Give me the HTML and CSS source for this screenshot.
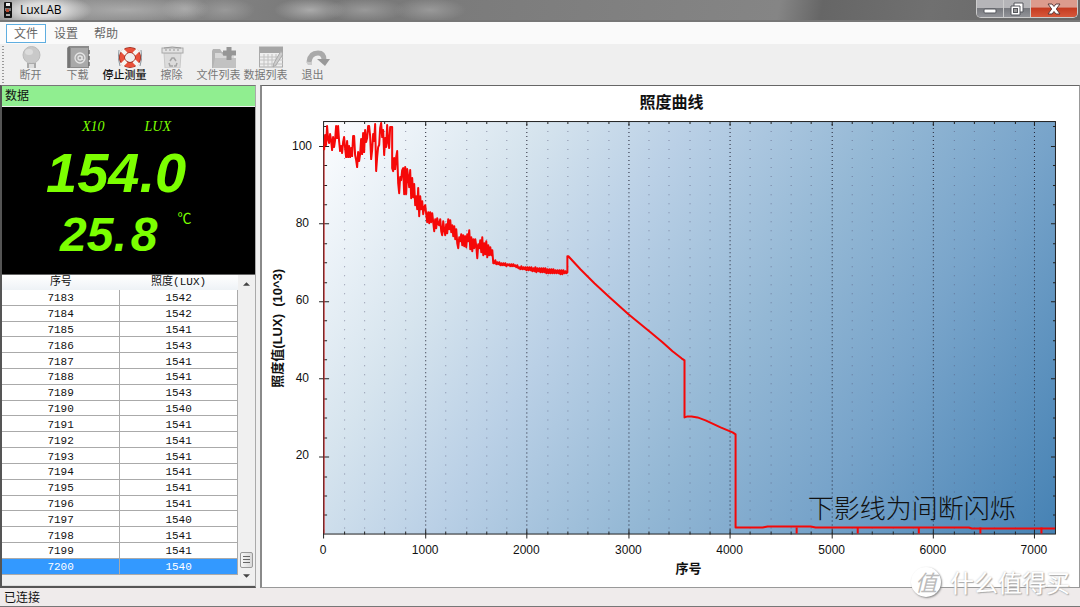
FILE: index.html
```html
<!DOCTYPE html>
<html lang="zh-CN">
<head>
<meta charset="utf-8">
<title>LuxLAB</title>
<link rel="stylesheet" href="styles.css">
</head>
<body>
<div class="window">
  <header class="titlebar">
    <svg class="app-icon" viewBox="0 0 8 16" aria-hidden="true"><rect width="8" height="16" rx="1" fill="#151515"/><rect x="2" y="1" width="4" height="3" fill="#eee"/><rect x="1" y="6" width="6" height="3" fill="#777"/><rect x="2" y="7" width="3" height="3" fill="#b5442a"/><rect x="2" y="12" width="4" height="2" fill="#aaa"/></svg>
    <h1 class="app-title">LuxLAB</h1>
    <div class="window-controls">
      <button class="win-btn" aria-label="最小化"><svg viewBox="0 0 14 14"><rect x="1" y="7" width="12" height="4" rx="1" fill="#fff" stroke="#55575c"/></svg></button>
      <button class="win-btn" aria-label="还原"><svg viewBox="0 0 14 14"><path d="M4 1h9v9h-3v3H1V4h3z" fill="#fff" stroke="#55575c"/><path d="M4 4h6v6" fill="none" stroke="#55575c"/><rect x="3.500" y="6.500" width="4" height="4" fill="#999" stroke="#55575c"/></svg></button>
      <button class="win-btn close" aria-label="关闭"><svg viewBox="0 0 14 14"><path d="M1 2h4l2 2.500L9 2h4L9.300 7l3.700 5H9L7 9.500 5 12H1l3.700-5z" fill="#fff" stroke="#5c3b3b"/></svg></button>
    </div>
  </header>

  <nav class="menubar">
    <button class="menu active">文件</button>
    <button class="menu">设置</button>
    <button class="menu">帮助</button>
  </nav>

  <div class="toolbar">
    <button class="tool"><svg viewBox="0 0 24 22"><circle cx="12.500" cy="9" r="8.500" fill="#c9c9c9" stroke="#bbb"/><ellipse cx="10" cy="6" rx="4" ry="3" fill="#dcdcdc"/><path d="M8 17h9v5H8z" fill="#aaa"/><path d="M10 18h5v4h-5z" fill="#ddd"/></svg><span>断开</span></button>
    <button class="tool"><svg viewBox="0 0 24 22"><path d="M3 0h20v22H1V2z" fill="#8b8b8b"/><path d="M5 2h17v19H5z" fill="#a9a9a9"/><path d="M3 1v21M23 4v4M23 10v4M23 16v4" stroke="#6f6f6f" stroke-width="1.500"/><circle cx="14" cy="12" r="5" fill="none" stroke="#e6e6e6" stroke-width="1.300"/><circle cx="14" cy="12" r="2" fill="none" stroke="#e6e6e6" stroke-width="1.300"/><path d="M16 10v3q1 2 3 0" fill="none" stroke="#e6e6e6"/></svg><span>下载</span></button>
    <button class="tool enabled"><svg class="shifted" viewBox="0 0 24 22"><path d="M1 4q-2 8 1 16M23 4q2 8-1 16" fill="none" stroke="#8c979f"/><ellipse cx="12" cy="11.500" rx="8" ry="7.500" fill="none" stroke="#9b2d1e" stroke-width="6"/><ellipse cx="12" cy="11.500" rx="8" ry="7.500" fill="none" stroke="#e9513b" stroke-width="4.500"/><path d="M4 4l4 4M20 4l-4 4M4 19l4-4M20 19l-4-4" stroke="#f5f5f2" stroke-width="4"/></svg><span>停止测量</span></button>
    <button class="tool"><svg viewBox="0 0 24 22"><path d="M4 7h17l-1 15H5z" fill="#dcdcdc" stroke="#c8c8c8"/><rect x="2" y="2" width="21" height="5" fill="#e2e2e2" stroke="#aaa"/><path d="M4 2q8-2 17 0M6 3v2M10 3v2M14 3v2M18 3v2" fill="none" stroke="#999"/><path d="M10 15l2-3h2l2 3M9 17l1 3h3M17 17l-1 3h-2" fill="none" stroke="#a4a4a4" stroke-width="1.500"/></svg><span>擦除</span></button>
    <button class="tool"><svg class="shifted" viewBox="0 0 24 22"><path d="M0 5l1-2h7l2 3h10v16H0z" fill="#b4b4b4"/><path d="M3 7h6l3 3h10v12H3z" fill="#d8d8d8"/><path d="M1 22l2-10h21v10z" fill="#c2c2c2"/><path d="M17 1v13M11 7h13" stroke="#969696" stroke-width="5"/></svg><span>文件列表</span></button>
    <button class="tool"><svg class="shifted" viewBox="0 0 24 22"><rect x=".500" y="1" width="23" height="20" fill="#eee" stroke="#aaa"/><path d="M1 1h23v6H1z" fill="#a5a5a5"/><path d="M1 11h23M1 14h23M1 18h23M5 8v13M9 8v13M13 8v13M17 8v13" stroke="#c2c2c2"/><path d="M22 5l2 3-7 11-3 2 1-4z" fill="#ccc" stroke="#aaa"/></svg><span>数据列表</span></button>
    <button class="tool"><svg class="shifted" viewBox="0 0 24 22"><path d="M3 16Q4 7 12 7q6 0 6 7" fill="none" stroke="#a9a9a9" stroke-width="5"/><path d="M11 13h13l-5 7z" fill="#999"/><path d="M0 16h6v3H2z" fill="#ccc"/></svg><span>退出</span></button>
  </div>

  <main class="content">
    <section class="side">
      <h2 class="side-title">数据</h2>
      <div class="meter">
        <div class="units"><span>X10</span><span>LUX</span></div>
        <div class="reading lux"><span>154.</span><span>0</span></div>
        <div class="reading temp"><span>25.</span><span>8</span><span class="degree">℃</span></div>
      </div>
      <div class="list">
        <div class="table-area">
          <table class="records">
            <thead><tr><th scope="col">序号</th><th scope="col">照度(LUX)</th></tr></thead>
            <tbody>
              <tr><td>7183</td><td>1542</td></tr>
              <tr><td>7184</td><td>1542</td></tr>
              <tr><td>7185</td><td>1541</td></tr>
              <tr><td>7186</td><td>1543</td></tr>
              <tr><td>7187</td><td>1541</td></tr>
              <tr><td>7188</td><td>1541</td></tr>
              <tr><td>7189</td><td>1543</td></tr>
              <tr><td>7190</td><td>1540</td></tr>
              <tr><td>7191</td><td>1541</td></tr>
              <tr><td>7192</td><td>1541</td></tr>
              <tr><td>7193</td><td>1541</td></tr>
              <tr><td>7194</td><td>1541</td></tr>
              <tr><td>7195</td><td>1541</td></tr>
              <tr><td>7196</td><td>1541</td></tr>
              <tr><td>7197</td><td>1540</td></tr>
              <tr><td>7198</td><td>1541</td></tr>
              <tr><td>7199</td><td>1541</td></tr>
              <tr class="selected"><td>7200</td><td>1540</td></tr>
            </tbody>
          </table>
        </div>
        <div class="scrollbar">
          <button class="arrow" aria-label="向上滚动"><svg viewBox="0 0 8 4"><path d="M0 4L4 0l4 4z" fill="#444"/></svg></button>
          <span class="track"></span>
          <span class="thumb"></span>
          <button class="arrow" aria-label="向下滚动"><svg viewBox="0 0 8 4"><path d="M0 0h8L4 4z" fill="#444"/></svg></button>
        </div>
      </div>
    </section>

    <section class="chart-pane">
      <svg class="chart" viewBox="262 86 816 500" role="img" aria-label="照度曲线">
        <defs>
          <linearGradient id="plot-fill" gradientUnits="userSpaceOnUse" x1="323" y1="121" x2="1031" y2="570">
            <stop offset="0" stop-color="#fcfdff"/><stop offset=".22" stop-color="#d6e4ee"/><stop offset=".37" stop-color="#bad0e6"/><stop offset=".57" stop-color="#94b8d5"/><stop offset=".74" stop-color="#78a4ca"/><stop offset="1" stop-color="#4682b4"/>
          </linearGradient>
        </defs>
        <text class="chart-title" x="671" y="108">照度曲线</text>
        <rect x="323.500" y="121.500" width="731" height="412" fill="url(#plot-fill)"/>
        <path class="grid-minor" d="M344.500 131V533M364.500 131V533M384.500 131V533M405.500 131V533M445.500 131V533M466.500 131V533M486.500 131V533M506.500 131V533M547.500 131V533M567.500 131V533M587.500 131V533M608.500 131V533M648.500 131V533M668.500 131V533M689.500 131V533M709.500 131V533M749.500 131V533M770.500 131V533M790.500 131V533M810.500 131V533M851.500 131V533M871.500 131V533M892.500 131V533M912.500 131V533M953.500 131V533M973.500 131V533M993.500 131V533M1014.500 131V533"/>
        <path class="grid-major" d="M425.500 124V533M526.500 124V533M628.500 124V533M729.500 124V533M831.500 124V533M932.500 124V533M1033.500 124V533"/>
        <path class="axis" d="M344.500 531v3m0-412v2M364.500 531v3m0-412v2M384.500 531v3m0-412v2M405.500 531v3m0-412v2M445.500 531v3m0-412v2M466.500 531v3m0-412v2M486.500 531v3m0-412v2M506.500 531v3m0-412v2M547.500 531v3m0-412v2M567.500 531v3m0-412v2M587.500 531v3m0-412v2M608.500 531v3m0-412v2M648.500 531v3m0-412v2M668.500 531v3m0-412v2M689.500 531v3m0-412v2M709.500 531v3m0-412v2M749.500 531v3m0-412v2M770.500 531v3m0-412v2M790.500 531v3m0-412v2M810.500 531v3m0-412v2M851.500 531v3m0-412v2M871.500 531v3m0-412v2M892.500 531v3m0-412v2M912.500 531v3m0-412v2M953.500 531v3m0-412v2M973.500 531v3m0-412v2M993.500 531v3m0-412v2M1014.500 531v3m0-412v2"/>
        <path class="axis" d="M323.500 529v9M425.500 529v9M526.500 529v9M628.500 529v9M729.500 529v9M831.500 529v9M932.500 529v9M1033.500 529v9M425.500 121v5M526.500 121v5M628.500 121v5M729.500 121v5M831.500 121v5M932.500 121v5M1033.500 121v5"/>
        <path class="axis" d="M319 146.500h10M319 223.500h10M319 301.500h10M319 378.500h10M319 456.500h10M1050 146.500h4M1050 223.500h4M1050 301.500h4M1050 378.500h4M1050 456.500h4"/>
        <path class="axis" d="M324 126.500h3m725 0h3M324 165.500h3m725 0h3M324 185.500h3m725 0h3M324 204.500h3m725 0h3M324 243.500h3m725 0h3M324 262.500h3m725 0h3M324 282.500h3m725 0h3M324 320.500h3m725 0h3M324 340.500h3m725 0h3M324 359.500h3m725 0h3M324 398.500h3m725 0h3M324 417.500h3m725 0h3M324 437.500h3m725 0h3M324 476.500h3m725 0h3M324 495.500h3m725 0h3M324 514.500h3m725 0h3"/>
        <rect class="axis" x="323.500" y="121.500" width="731" height="412"/>
        <path class="start" d="M324 533V146"/>
        <polyline class="curve" points="324,150 325,135 326,145 327,126 328,139 329,143 330,134 331,140 332,150 333,137 334,147 335,140 336,126 337,138 338,126 339,141 340,151 341,146 342,153 343,142 344,137 345,148 346,157 347,141 348,157 349,146 350,157 351,148 352,156 353,136 354,136 355,155 356,160 357,167 358,152 359,161 360,154 361,139 362,154 363,133 364,152 365,130 366,142 367,138 368,126 369,126 370,136 371,159 372,150 373,134 374,141 375,124 376,171 377,157 378,147 379,145 380,128 381,123 382,137 383,130 384,155 385,138 386,147 387,125 388,142 389,148 390,127 391,127 392,127 392,168 393,171 394,158 395,169 396,157 397,151 398,183 399,193 400,177 401,180 402,170 403,168 404,194 405,167 406,194 407,169 408,177 409,187 410,170 411,198 412,178 413,197 414,184 415,205 416,196 417,209 418,188 419,216 420,196 421,209 422,201 423,214 424,207 425,205 426,214 427,222 428,212 429,223 430,212 431,222 432,213 433,222 434,231 435,219 436,228 437,218 438,224 439,225 440,219 441,231 442,235 443,221 444,230 445,235 446,224 447,233 448,219 449,229 450,220 451,232 452,225 453,236 454,226 455,239 456,229 457,243 458,248 459,237 460,241 461,234 462,245 463,235 464,246 465,236 466,247 467,234 468,241 469,230 470,249 471,237 472,251 473,239 474,248 475,239 476,246 477,258 478,244 479,248 480,240 481,252 482,237 483,255 484,243 485,254 486,241 487,257 488,245 489,255 490,247 491,255 492,250 493,263 494,263 495,260 496,264 497,262 498,264 499,262 500,265 501,263 502,265 503,263 504,265 505,263 506,266 507,264 508,265 509,264 510,266 511,264 512,266 513,264 514,266 515,265 516,267 517,265 518,268 519,267 520,269 521,266 522,269 523,267 524,269 525,267 526,270 527,267 528,270 529,267 530,270 531,267 532,271 533,268 534,271 535,267 536,272 537,268 538,271 539,268 540,272 541,268 542,272 543,268 544,272 545,268 546,273 547,269 548,273 549,269 550,273 551,269 552,273 553,269 554,273 555,270 556,273 557,270 558,273 559,270 560,274 561,270 562,274 563,270 564,273 565,271 566,273 567,272 567,256 568,256 580,269 594,283 608,296 628,314 650,332 662,342 672,351 681,358 684,360 684,417 687,416 691,416 697,417 705,420 720,427 732,432 735,434 735,527 762,527 767,526 810,526 815,527 968,527 971,528 1054,528"/>
        <path class="curve" d="M796 527v6M857 527v6M918 527v6M979.500 527v6M1040.500 527v6"/>
        <g class="ticks-x">
          <text x="323" y="553">0</text><text x="425" y="553">1000</text><text x="526" y="553">2000</text><text x="628" y="553">3000</text><text x="729" y="553">4000</text><text x="831" y="553">5000</text><text x="932" y="553">6000</text><text x="1033" y="553">7000</text>
        </g>
        <g class="ticks-y">
          <text x="312" y="150">100</text><text x="309" y="227">80</text><text x="309" y="304">60</text><text x="309" y="382">40</text><text x="309" y="459">20</text>
        </g>
        <text class="axis-name" x="688" y="572">序号</text>
        <text class="axis-name" transform="translate(282 328) rotate(-90)" xml:space="preserve">照度值(LUX)  (10^3)</text>
        <text class="note" x="807" y="517">下影线为间断闪烁</text>
      </svg>
    </section>
  </main>

  <footer class="statusbar">已连接</footer>
  <div class="bottom-edge"></div>
  <div class="watermark"><span class="badge">值</span><span>什么值得买</span></div>
</div>
</body>
</html>
```
FILE: styles.css
```css
* { box-sizing: border-box; }
body { margin: 0; font: 12px/16px "Noto Sans", "Noto Sans CJK SC", sans-serif; color: #111; }
button { font: inherit; color: inherit; margin: 0; padding: 0; border: 0; background: none; }
h1, h2 { margin: 0; font-size: 12px; font-weight: 400; }
svg { display: block; }

.window { position: relative; display: flex; flex-direction: column; min-height: 100vh; background: #f0f0f0; }

.titlebar {
  display: flex; align-items: center; height: 22px; padding-left: 4px; gap: 8px;
  border-bottom: 2px solid #777;
  background:
    radial-gradient(ellipse 50px 16px at 42px 10px, #ddd 40%, transparent),
    radial-gradient(ellipse 80px 12px at 125px 10px, #aaa, transparent),
    radial-gradient(ellipse 24px 12px at 185px 9px, #aaa, transparent),
    radial-gradient(ellipse 30px 12px at 225px 10px, #999, transparent),
    radial-gradient(ellipse 36px 12px at 310px 10px, #aaa, transparent),
    radial-gradient(ellipse 40px 12px at 365px 10px, #999, transparent),
    radial-gradient(ellipse 36px 12px at 430px 10px, #999, transparent),
    linear-gradient(100deg, #999 0, #777 30%, #858585 72%, #666 76%, #707070 86%, #666 100%);
}
.app-icon { width: 8px; height: 16px; }
.app-title { flex: 1; font-family: "Open Sans", sans-serif; color: #000; }
.window-controls { display: flex; align-self: flex-start; height: 18px; margin-right: 2px; border: 1px solid #ccc; border-top: 0; border-radius: 0 0 5px 5px; overflow: hidden; }
.win-btn { display: flex; align-items: center; justify-content: center; width: 27px; border-right: 1px solid #ccc; background: linear-gradient(#b5b5b8 45%, #77797e 50%, #929398); }
.win-btn svg { width: 14px; height: 14px; }
.win-btn.close { width: 46px; border: 0; background: linear-gradient(#dc9b8d 40%, #c53c22 50%, #d6583b); }

.menubar { display: flex; align-items: center; height: 22px; padding-left: 6px; background: #fafafa; color: #666; }
.menu { width: 40px; height: 19px; line-height: 17px; border: 1px solid transparent; }
.menu.active { border-color: #5faee0; background: #fff; }

.toolbar { display: flex; height: 41px; padding-left: 7px; background: radial-gradient(circle, #999 1px, transparent 1px) 2px 4px / 2px 3px repeat-y, #efefef; }
.tool { display: flex; flex-direction: column; align-items: center; width: 47px; padding-top: 2px; font-size: 11px; line-height: 14px; color: #777; white-space: nowrap; }
.tool svg { width: 24px; height: 22px; }
.tool .shifted { margin-left: 11px; }
.tool.enabled { color: #111; font-weight: 500; }

.content { flex: 1; display: flex; gap: 4px; }
.side { display: flex; flex-direction: column; width: 256px; border: 2px solid #555; border-top: 1px solid #777; border-right: 1px solid #aaa; }
.side-title { height: 20px; padding-left: 3px; line-height: 20px; background: #90ee90; }
.meter { height: 168px; padding-top: 12px; border-top: 1px solid #eee; background: #000; color: #7cff00; }
.units { display: flex; gap: 40px; padding-left: 80px; font: italic 14px/16px "Liberation Serif", serif; }
.reading { display: flex; font-family: "Liberation Sans", sans-serif; font-style: italic; font-weight: 700; }
.lux { padding: 6px 0 0 44px; gap: 0; font-size: 56px; line-height: 64px; }
.temp { padding: 2px 0 0 58px; gap: 4px; font-size: 48px; line-height: 56px; }
.degree { margin-left: 16px; font: 14px/20px "Noto Sans CJK SC", sans-serif; }

.list { flex: 1; display: flex; border-top: 1px solid #666; background: #efefef; border-bottom: 1px solid #ddd; }
.table-area { flex: 1; display: flex; padding-bottom: 10px; }
.records { width: 100%; table-layout: fixed; border-collapse: collapse; background: #fff; font: 11px/12px "Liberation Mono", "Noto Sans CJK SC", monospace; text-align: center; }
.records th { height: 15px; padding: 0; font-weight: 400; line-height: 15px; background: linear-gradient(#fff, #eef2f6); }
.records td { padding: 2px 0 0; border-right: 1px solid #aaa; border-bottom: 1px solid #aaa; }
.selected td { background: #3399ff; color: #fff; }
.scrollbar { display: flex; flex-direction: column; align-items: center; width: 17px; background: #f0f0f0; }
.arrow { display: flex; align-items: center; justify-content: center; width: 17px; height: 17px; }
.arrow svg { width: 7px; height: 4px; }
.track { flex: 1; }
.thumb { width: 13px; height: 16px; border: 1px solid #999; border-radius: 2px; background: repeating-linear-gradient(#666 0 1px, transparent 1px 3px) center / 7px 8px no-repeat, linear-gradient(90deg, #f6f6f6, #d8d8d8); }

.chart-pane { flex: 1; min-width: 0; display: flex; border: 1px solid #999; border-top-color: #666; border-left: 2px solid #8a8a8a; background: #fff; }
.chart { width: 100%; height: 100%; font-family: "Liberation Sans", "Noto Sans CJK SC", sans-serif; fill: #111; }
.chart-title { font-size: 16px; font-weight: 700; text-anchor: middle; }
.axis-name { font-size: 13px; font-weight: 700; text-anchor: middle; }
.grid-minor { fill: none; stroke: #557; stroke-opacity: .6; stroke-dasharray: 1 8; }
.grid-major { fill: none; stroke: #223; stroke-dasharray: 1 3; }
.axis { fill: none; stroke: #222; }
.start { stroke: #c22; }
.curve { fill: none; stroke: #f50808; stroke-width: 2; stroke-linejoin: round; }
.ticks-x { font-size: 12px; text-anchor: middle; }
.ticks-y { font-size: 12px; text-anchor: end; }
.note { font-size: 26px; font-weight: 300; }

.statusbar { height: 18px; padding-left: 4px; line-height: 20px; background: #efebeb; }
.bottom-edge { height: 2px; border-top: 1px solid #777; background: #bbb; }

.watermark { position: absolute; right: 10px; bottom: 10px; display: flex; align-items: center; gap: 9px; font: 400 24px/32px "Noto Sans CJK SC", sans-serif; color: #fff; text-shadow: 1px 1px 1px #aaa, 0 0 2px #bbb; }
.badge { width: 30px; height: 30px; border-radius: 50%; background: #fff; box-shadow: 1px 1px 2px #888; font-size: 22px; line-height: 28px; text-align: center; color: #bbb; text-shadow: none; font-style: italic; }
```
